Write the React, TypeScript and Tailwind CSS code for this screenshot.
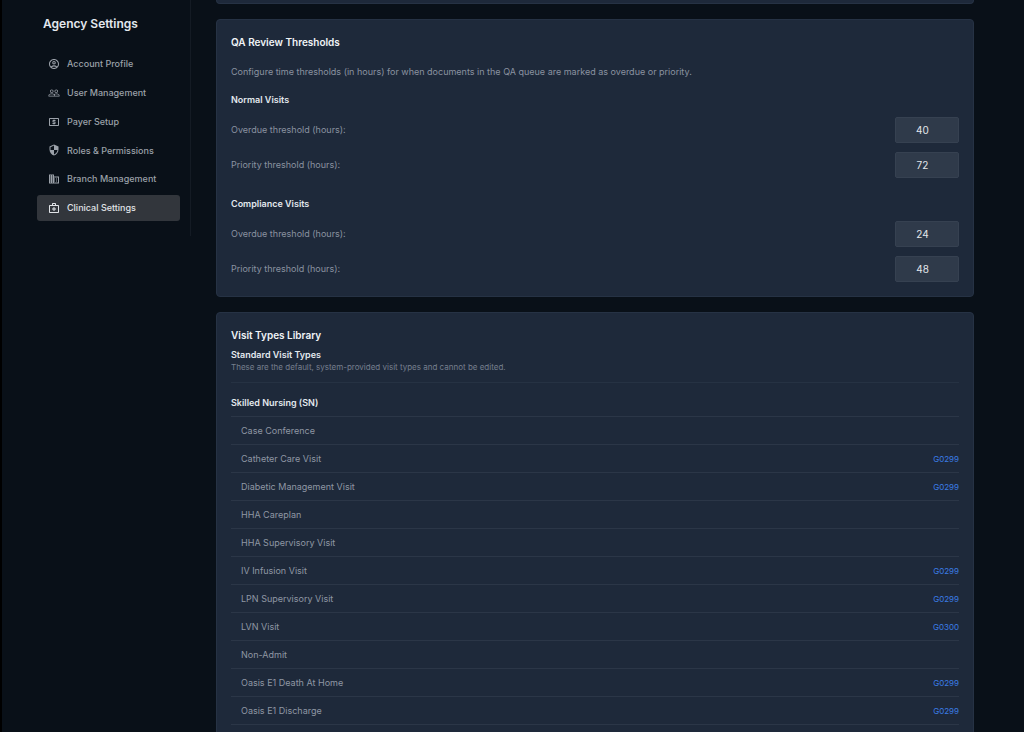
import {
    MdBusiness,
    MdOutlineAccountCircle,
    MdOutlineLocalAtm,
    MdOutlineMedicalServices,
    MdPeopleOutline,
    MdSecurity,
} from 'react-icons/md'

const navItems = [
    { label: 'Account Profile', icon: MdOutlineAccountCircle },
    { label: 'User Management', icon: MdPeopleOutline },
    { label: 'Payer Setup', icon: MdOutlineLocalAtm },
    { label: 'Roles & Permissions', icon: MdSecurity },
    { label: 'Branch Management', icon: MdBusiness },
    { label: 'Clinical Settings', icon: MdOutlineMedicalServices, active: true },
]

const thresholdGroups = [
    { id: 'normal', title: 'Normal Visits', overdue: 40, priority: 72 },
    { id: 'compliance', title: 'Compliance Visits', overdue: 24, priority: 48 },
]

const visitTypes = [
    { name: 'Case Conference', code: '' },
    { name: 'Catheter Care Visit', code: 'G0299' },
    { name: 'Diabetic Management Visit', code: 'G0299' },
    { name: 'HHA Careplan', code: '' },
    { name: 'HHA Supervisory Visit', code: '' },
    { name: 'IV Infusion Visit', code: 'G0299' },
    { name: 'LPN Supervisory Visit', code: 'G0299' },
    { name: 'LVN Visit', code: 'G0300' },
    { name: 'Non-Admit', code: '' },
    { name: 'Oasis E1 Death At Home', code: 'G0299' },
    { name: 'Oasis E1 Discharge', code: 'G0299' },
]

function ThresholdField({ id, label, value }: { id: string; label: string; value: number }) {
    return (
        <div className="flex items-center justify-between">
            <label htmlFor={id} className="text-[9px] text-[#8a92a0]">
                {label}
            </label>
            <input
                id={id}
                type="number"
                defaultValue={value}
                className="h-[26px] w-16 rounded-xs border border-[#364151] bg-[#2f3a4a] pl-1.5 text-center text-[10px] text-[#e3e6ea]"
            />
        </div>
    )
}

export default function App() {
    return (
        <div className="flex h-screen overflow-hidden border-l-2 border-black bg-[#091018] font-['Inter',sans-serif]">
            <aside className="h-[236px] w-[189px] shrink-0 border-r border-[#141b24] pr-[10px] pl-[35px]">
                <h1 className="px-[6px] pt-[15px] text-[12px] leading-[18px] font-semibold text-[#e3e8ee]">
                    Agency Settings
                </h1>
                <nav className="mt-[18px] flex h-[170px] flex-col justify-between">
                    {navItems.map(({ label, icon: Icon, active }) => (
                        <a
                            key={label}
                            href="#"
                            aria-current={active ? 'page' : undefined}
                            className={
                                active
                                    ? 'flex h-[26px] items-center gap-[7px] rounded-[3px] bg-[#32363c] px-[11px] text-[9px] font-medium text-[#e0e3e7]'
                                    : 'flex h-[26px] items-center gap-[7px] rounded-[3px] px-[11px] text-[9px] font-medium text-[#9ba1a9]'
                            }
                        >
                            <Icon className="size-3" />
                            {label}
                        </a>
                    ))}
                </nav>
            </aside>

            <main className="mr-[50px] ml-[25px] flex min-w-0 flex-1 flex-col gap-[15px]">
                <div className="h-1 shrink-0 rounded-b-[4px] border border-t-0 border-[#263244] bg-[#1e293a]" />

                <section className="shrink-0 rounded-[4px] border border-[#263244] bg-[#1e293a] px-[14px] pt-[14px] pb-[14px]">
                    <h2 className="text-[10px] leading-4 font-semibold text-[#f0f3f6]">QA Review Thresholds</h2>
                    <p className="mt-[14px] text-[9px] leading-4 text-[#8a92a0]">
                        Configure time thresholds (in hours) for when documents in the QA queue are marked as overdue or
                        priority.
                    </p>
                    <div className="mt-3 flex flex-col gap-[18px]">
                        {thresholdGroups.map((group) => (
                            <div key={group.id}>
                                <h3 className="text-[9px] leading-4 font-semibold text-[#e3e8ee]">{group.title}</h3>
                                <div className="mt-[9px] flex flex-col gap-[9px]">
                                    <ThresholdField
                                        id={`${group.id}-overdue`}
                                        label="Overdue threshold (hours):"
                                        value={group.overdue}
                                    />
                                    <ThresholdField
                                        id={`${group.id}-priority`}
                                        label="Priority threshold (hours):"
                                        value={group.priority}
                                    />
                                </div>
                            </div>
                        ))}
                    </div>
                </section>

                <section className="shrink-0 rounded-[4px] border border-[#263244] bg-[#1e293a] px-[14px] pt-[14px]">
                    <h2 className="text-[10px] leading-4 font-semibold text-[#f0f3f6]">Visit Types Library</h2>
                    <div className="border-b border-[#263243] pb-[10px]">
                        <h3 className="mt-1 text-[9px] leading-4 font-semibold text-[#e3e8ee]">Standard Visit Types</h3>
                        <p className="text-[8px] leading-[9px] text-[#767f8e]">
                            These are the default, system-provided visit types and cannot be edited.
                        </p>
                    </div>
                    <h3 className="mt-3 text-[9px] leading-4 font-semibold text-[#e3e8ee]">Skilled Nursing (SN)</h3>
                    <ul className="mt-[5px]">
                        {visitTypes.map((visit) => (
                            <li
                                key={visit.name}
                                className="flex h-7 items-center justify-between border-t border-[#2b3647] pl-[10px] text-[9px] text-[#8f97a4]"
                            >
                                {visit.name}
                                {visit.code && <span className="text-[8px] text-[#3b7de6]">{visit.code}</span>}
                            </li>
                        ))}
                        <li className="h-7 border-t border-[#2b3647]" />
                    </ul>
                </section>
            </main>
        </div>
    )
}
